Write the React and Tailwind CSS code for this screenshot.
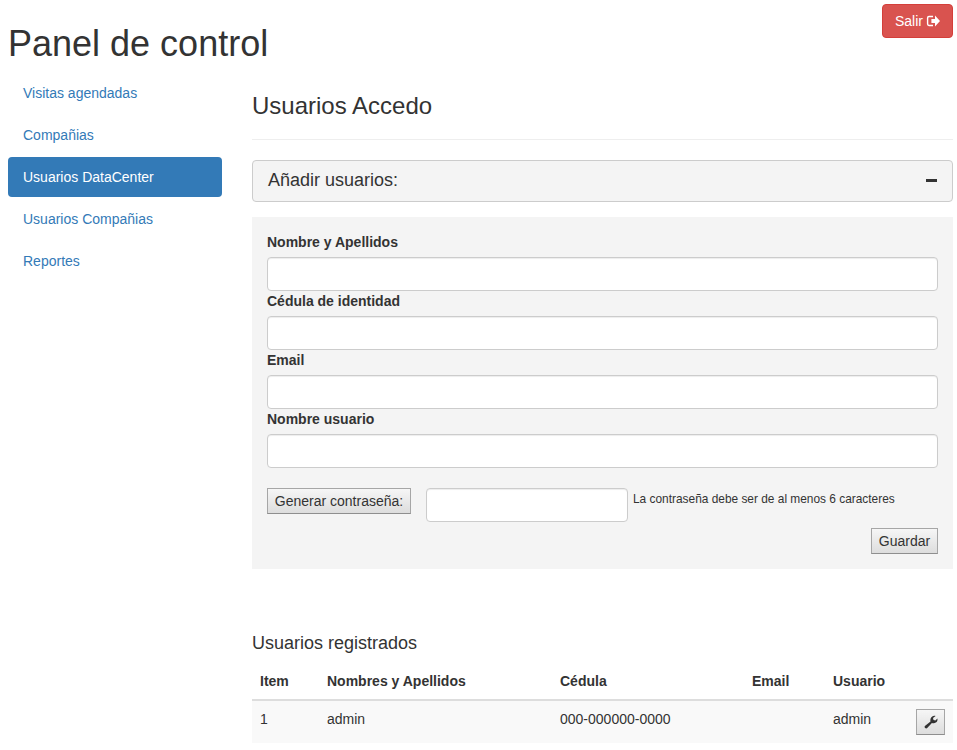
import React from "react";

const navItems = ["Visitas agendadas", "Compañias", "Usuarios DataCenter", "Usuarios Compañias", "Reportes"];
const fields = ["Nombre y Apellidos", "Cédula de identidad", "Email", "Nombre usuario"];

function LogOutIcon() {
  return (
    <svg className="h-[14px] w-[14px]" viewBox="0 0 14 14" fill="none">
      <path d="M7 2.5H3Q1.6 2.5 1.6 3.9V10.1Q1.6 11.5 3 11.5H7" stroke="#fff" strokeWidth="1.4" />
      <path d="M9 1.6L14 7L9 12.4V9H5.4V5H9Z" fill="#fff" />
    </svg>
  );
}

function WrenchIcon() {
  return (
    <svg className="h-[14px] w-[14px]" viewBox="0 0 14 14">
      <path
        d="M.9 11L6.5 6.6C6 4.7 6.6 2.4 8.2 1.4C9.3 .7 10.5 .6 11.6 1L9 2.9L9.5 4.9L11.4 5.4L13.4 3.4C13.8 5 13.1 6.8 11.8 7.6C10.6 8.4 9.1 8.4 7.9 7.9L3.2 13C2.7 13.6 1.7 13.5 1.1 12.9C.5 12.3 .4 11.5 .9 11Z"
        fill="#333"
      />
    </svg>
  );
}

function NativeButton({ className, children, ...rest }) {
  return (
    <button
      type="button"
      className={`flex h-[26px] items-center justify-center border border-[#a6a6a6] border-b-[#8e8e8e] bg-linear-to-b from-[#f6f6f6] to-[#dddddd] leading-5 ${className}`}
      {...rest}
    >
      {children}
    </button>
  );
}

export default function App() {
  return (
    <div className="h-[750px] overflow-hidden bg-white font-['Liberation_Sans',Arial,sans-serif] text-sm leading-5 text-[#333]">
      <header className="flex h-[73px] items-start justify-between pt-1 pr-1 pl-2">
        <h1 className="mt-5 text-[36px] leading-[40px]">Panel de control</h1>
        <button
          type="button"
          className="flex h-[34px] w-[71px] items-center justify-center gap-[3px] rounded border border-[#d43f3a] bg-[#d9534f] text-white"
        >
          Salir <LogOutIcon />
        </button>
      </header>

      <div className="flex gap-[30px] pr-1 pl-2">
        <nav className="flex w-[214px] shrink-0 flex-col gap-0.5">
          {navItems.map((item) => (
            <a
              key={item}
              className={`block rounded px-[15px] py-[10px] ${
                item === "Usuarios DataCenter" ? "bg-[#337ab7] text-white" : "text-[#337ab7]"
              }`}
            >
              {item}
            </a>
          ))}
        </nav>

        <main className="w-[701px] shrink-0">
          <h2 className="mt-5 border-b border-[#eee] pb-5 text-2xl leading-[26px]">Usuarios Accedo</h2>

          <section className="mt-5 flex h-[42px] items-center justify-between rounded border border-[#ccc] bg-[#f4f4f4] pr-[15px] pl-[15px]">
            <h3 className="-mt-[3px] text-lg leading-5">Añadir usuarios:</h3>
            <span className="mb-px h-[3px] w-[11px] bg-[#333]" />
          </section>

          <form className="mt-[15px] h-[352px] bg-[#f4f4f4] p-[15px]">
            {fields.map((field) => (
              <label key={field} className="block font-bold">
                {field}
                <input
                  type="text"
                  className="mt-[5px] block h-[34px] w-full rounded border border-[#ccc] bg-white px-3 shadow-[inset_0_1px_1px_rgba(0,0,0,0.075)]"
                />
              </label>
            ))}
            <div className="mt-5 flex items-start">
              <NativeButton className="w-[144px]">Generar contraseña:</NativeButton>
              <input
                type="text"
                className="ml-[15px] h-[34px] w-[202px] rounded border border-[#ccc] bg-white px-3 shadow-[inset_0_1px_1px_rgba(0,0,0,0.075)]"
              />
              <span className="ml-[5px] text-[11.9px] leading-[22px]">La contraseña debe ser de al menos 6 caracteres</span>
            </div>
            <div className="mt-1.5 flex justify-end">
              <NativeButton className="w-[67px]">Guardar</NativeButton>
            </div>
          </form>

          <h3 className="mt-16 text-lg leading-5">Usuarios registrados</h3>
          <table className="mt-[10px] w-full table-fixed border-collapse text-left">
            <colgroup>
              <col className="w-[67px]" />
              <col className="w-[233px]" />
              <col className="w-[192px]" />
              <col className="w-[81px]" />
              <col className="w-[83px]" />
              <col className="w-[45px]" />
            </colgroup>
            <thead>
              <tr className="h-[37px] border-b-2 border-[#ddd]">
                <th className="p-2 pt-[7px]">Item</th>
                <th className="p-2 pt-[7px]">Nombres y Apellidos</th>
                <th className="p-2 pt-[7px]">Cédula</th>
                <th className="p-2 pt-[7px]">Email</th>
                <th className="p-2 pt-[7px]">Usuario</th>
                <th />
              </tr>
            </thead>
            <tbody>
              <tr className="h-[43px] bg-[#f9f9f9] align-top">
                <td className="p-2">1</td>
                <td className="p-2">admin</td>
                <td className="p-2">000-000000-0000</td>
                <td className="p-2" />
                <td className="p-2">admin</td>
                <td className="p-2">
                  <NativeButton className="w-[29px]" aria-label="Editar">
                    <WrenchIcon />
                  </NativeButton>
                </td>
              </tr>
            </tbody>
          </table>
        </main>
      </div>
    </div>
  );
}
